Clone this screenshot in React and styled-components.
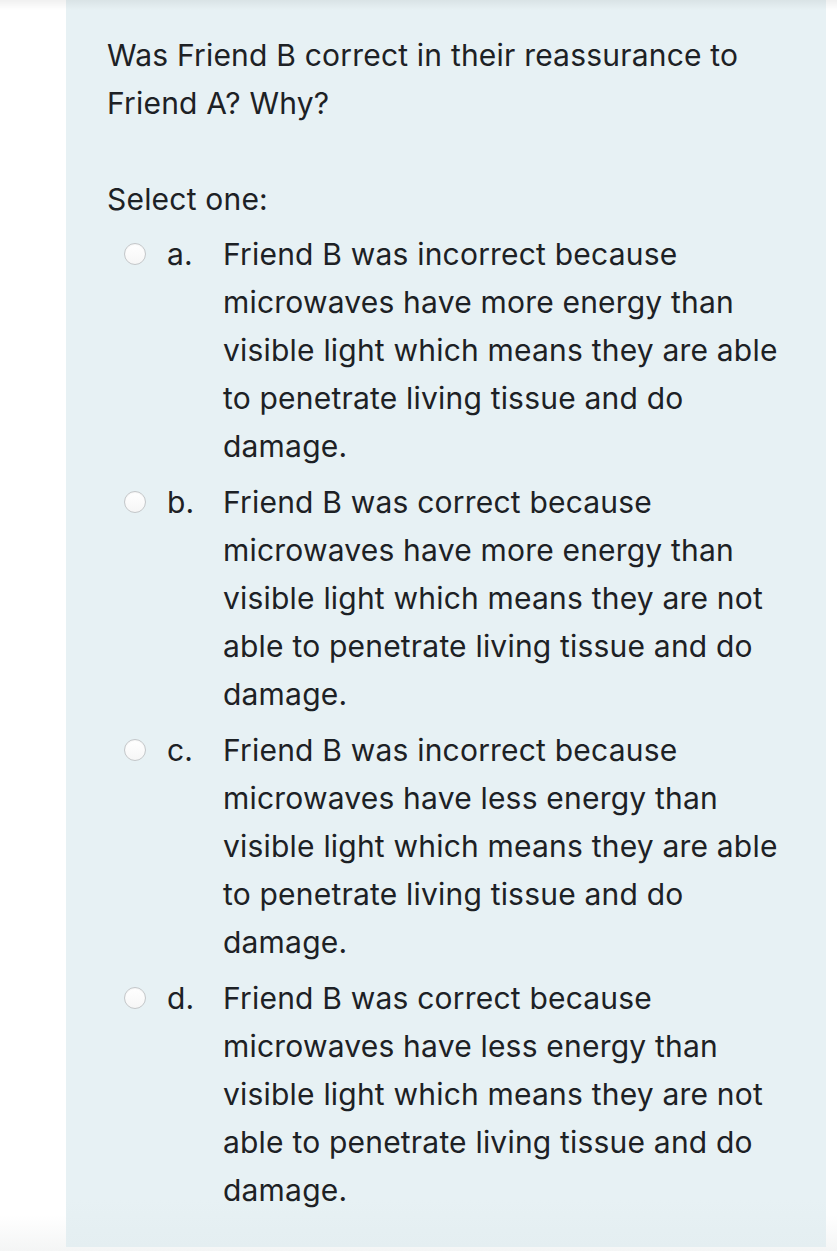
import styled, { createGlobalStyle } from 'styled-components';

const GlobalStyle = createGlobalStyle`
  html, body {
    margin: 0;
    padding: 0;
    background: #ffffff;
  }
  body {
    font-family: Inter, "Liberation Sans", Arial, sans-serif;
    color: #1d2125;
  }
`;

const options = [
  {
    letter: 'a.',
    text: 'Friend B was incorrect because microwaves have more energy than visible light which means they are able to penetrate living tissue and do damage.',
  },
  {
    letter: 'b.',
    text: 'Friend B was correct because microwaves have more energy than visible light which means they are not able to penetrate living tissue and do damage.',
  },
  {
    letter: 'c.',
    text: 'Friend B was incorrect because microwaves have less energy than visible light which means they are able to penetrate living tissue and do damage.',
  },
  {
    letter: 'd.',
    text: 'Friend B was correct because microwaves have less energy than visible light which means they are not able to penetrate living tissue and do damage.',
  },
];

export default function App() {
  return (
    <>
      <GlobalStyle />
      <Page>
        <TopShade />
        <Panel>
          <Question>
            Was Friend B correct in their reassurance to Friend A? Why?
          </Question>
          <Prompt>Select one:</Prompt>
          <OptionList>
            {options.map((option) => {
              return (
                <Option key={option.letter}>
                  <Radio />
                  <Letter>{option.letter}</Letter>
                  <OptionText>{option.text}</OptionText>
                </Option>
              );
            })}
          </OptionList>
        </Panel>
      </Page>
    </>
  );
}

const Page = styled.div`
  position: relative;
  width: 837px;
  height: 1251px;
  padding-left: 66px;
  box-sizing: border-box;
  background: linear-gradient(to bottom, #ffffff 0, #ffffff 1215px, #f4f5f5 1251px);
`;

const TopShade = styled.div`
  position: absolute;
  top: 0;
  left: 0;
  right: 0;
  height: 10px;
  background: linear-gradient(to bottom, rgba(0, 0, 0, 0.06), rgba(0, 0, 0, 0));
  pointer-events: none;
`;

const Panel = styled.div`
  width: 760px;
  height: 1247px;
  box-sizing: border-box;
  padding: 31px 30px 0 41px;
  background: linear-gradient(to bottom, #e7f1f4 0, #e7f1f4 1200px, #e4eef1 1247px);
  font-size: 30px;
  line-height: 48px;
  letter-spacing: 0.2px;
`;

const Question = styled.p`
  margin: 0;
  width: 660px;
`;

const Prompt = styled.p`
  margin: 48px 0 0 0;
`;

const OptionList = styled.div`
  display: flex;
  flex-direction: column;
  gap: 8px;
  margin-top: 7px;
`;

const Option = styled.div`
  display: flex;
  align-items: flex-start;
`;

const Radio = styled.span`
  flex: none;
  width: 22px;
  height: 22px;
  margin: 13px 0 0 17px;
  box-sizing: border-box;
  border-radius: 50%;
  border: 1px solid #c4c7c9;
  background: linear-gradient(to bottom, #ffffff, #f6f6f6);
  box-shadow: inset 0 1px 1px rgba(0, 0, 0, 0.04);
`;

const Letter = styled.span`
  flex: none;
  width: 56px;
  margin-left: 21px;
`;

const OptionText = styled.span`
  width: 570px;
`;
